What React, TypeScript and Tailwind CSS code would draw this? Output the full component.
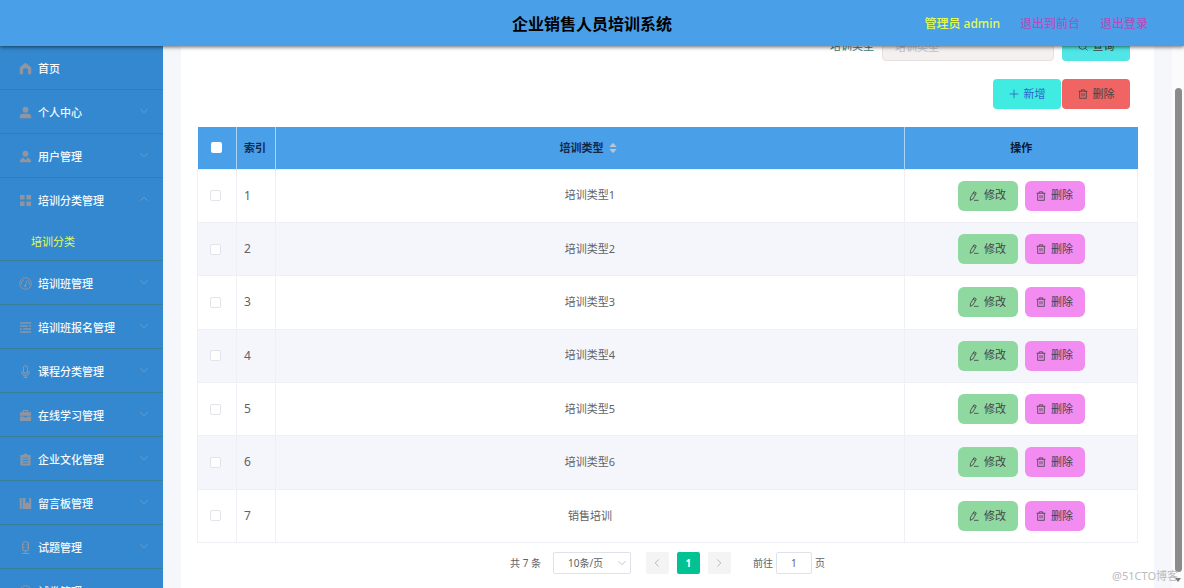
import { ReactNode } from "react";

type IconName =
  | "home"
  | "user"
  | "custom"
  | "grid"
  | "gauge"
  | "lines"
  | "mic"
  | "case"
  | "clipboard"
  | "book"
  | "stand";

interface MenuItem {
  title: string;
  icon: IconName;
  leaf?: boolean;
  children?: string[];
}

const menus: MenuItem[] = [
  { title: "首页", icon: "home", leaf: true },
  { title: "个人中心", icon: "user" },
  { title: "用户管理", icon: "custom" },
  { title: "培训分类管理", icon: "grid", children: ["培训分类"] },
  { title: "培训班管理", icon: "gauge" },
  { title: "培训班报名管理", icon: "lines" },
  { title: "课程分类管理", icon: "mic" },
  { title: "在线学习管理", icon: "case" },
  { title: "企业文化管理", icon: "clipboard" },
  { title: "留言板管理", icon: "book" },
  { title: "试题管理", icon: "stand" },
  { title: "试卷管理", icon: "gauge" },
];

const rows = ["培训类型1", "培训类型2", "培训类型3", "培训类型4", "培训类型5", "培训类型6", "销售培训"];

const shapes: Record<IconName, ReactNode> = {
  home: <path fill="currentColor" d="M7 .8.8 5.600v7.200c0 .3.2.5.5.5h3V9.500a2.700 2.700 0 0 1 5.400 0v3.800h3c.3 0 .5-.2.5-.5V5.600z" />,
  user: (
    <g fill="currentColor">
      <circle cx="7" cy="4" r="3.2" />
      <path d="M.8 13.200v-1.600c0-2 1.400-3.300 3.300-3.300h5.800c1.900 0 3.300 1.300 3.300 3.300v1.600z" />
    </g>
  ),
  custom: (
    <g fill="currentColor">
      <circle cx="7" cy="4" r="3.2" />
      <path d="M.8 13.200c0-2.600 1.500-4.500 3.900-5.100L7 11l2.300-2.900c2.400.6 3.900 2.500 3.900 5.100z" />
    </g>
  ),
  grid: <path fill="currentColor" d="M1 1h5v5H1zM8 1h5v5H8zM1 8h5v5H1zM8 8h5v5H8z" />,
  gauge: (
    <g fill="none" stroke="currentColor">
      <circle cx="7" cy="7" r="6.200" />
      <path d="M3 8.500A4.200 4.200 0 0 1 5.500 3.200M8.800 3.300A4.200 4.200 0 0 1 11 8.500M8.200 4.500 7 9" />
      <circle cx="6.800" cy="9.600" r=".9" fill="currentColor" />
    </g>
  ),
  lines: <path stroke="currentColor" strokeWidth="1.500" d="M1 2.200h12M1 5.400h8.500M10.800 5.400H13M1 8.600h2.200M4.500 8.600H13M1 11.800h12" />,
  mic: (
    <g fill="none" stroke="currentColor" strokeWidth="1.200">
      <rect x="4.800" y=".8" width="4.400" height="8" rx="2.200" />
      <path d="M2.800 6.500c0 3 1.700 4.700 4.200 4.700s4.200-1.700 4.200-4.700M7 11.200v2.300M5 13.300h4" />
    </g>
  ),
  case: (
    <g fill="currentColor">
      <path d="M4 3.500V1.200h6v2.300h3v3.800H1V3.500zm1.200 0h3.600V2.300H5.200z" />
      <path d="M1 8.200h4.800v1h2.400v-1H13V13H1z" />
    </g>
  ),
  clipboard: (
    <path fill="currentColor" fillRule="evenodd" d="M5 .8h4v1.400h3.500v11.300h-11V2.200H5zM4 5v1h6V5zm0 2.600v1h6v-1zm0 2.600v1h6v-1z" />
  ),
  book: <path fill="currentColor" d="M.8 1h2.200v12H.8zM3.800 1H7v6l2-1.500L11 7V1h2.200v12H3.800z" />,
  stand: (
    <g fill="none" stroke="currentColor" strokeWidth="1.200">
      <rect x="3.800" y=".8" width="6.400" height="9.800" rx="2.600" />
      <path d="M3.800 4h2M8.200 4h2M3.800 7h2M8.200 7h2M7 10.600v2.600M3 13.400h8" />
    </g>
  ),
};

function MenuIcon({ name }: { name: IconName }) {
  return (
    <svg viewBox="0 0 14 14" className="mb-0.5 h-[13px] w-[13px] shrink-0 text-[#9095a0]" aria-hidden="true">
      {shapes[name]}
    </svg>
  );
}

function Chevron({ className, d }: { className: string; d: string }) {
  return (
    <svg viewBox="0 0 10 10" className={className} fill="none" stroke="currentColor" aria-hidden="true">
      <path d={d} />
    </svg>
  );
}

const DOWN = "M1.500 3.200 5 6.700l3.500-3.500";
const UP = "M1.500 6.700 5 3.200l3.500 3.500";
const LEFT = "M6.700 1.500 3.200 5l3.500 3.500";
const RIGHT = "M3.300 1.500 6.800 5 3.300 8.500";

function TrashIcon() {
  return (
    <svg viewBox="0 0 12 12" className="h-2.5 w-2.5" fill="none" stroke="currentColor" aria-hidden="true">
      <path d="M.8 2.700h10.400M4 2.700V1h4v1.700M2 2.700v8.500h8V2.700M4.800 4.900v4M7.200 4.900v4" />
    </svg>
  );
}

function EditIcon() {
  return (
    <svg viewBox="0 0 12 12" className="h-2.5 w-2.5" fill="none" stroke="currentColor" aria-hidden="true">
      <path d="M6 .8 8.800 2.400 4.700 9.600 1.500 11.200l.3-3.400zM4.900 2.700l2.800 1.600M6 11.200h5.400" />
    </svg>
  );
}

function Sidebar() {
  return (
    <nav className="w-[163px] shrink-0 overflow-hidden bg-[#3388cf]">
      <ul>
        {menus.map((item) => (
          <li key={item.title} className="border-b border-[#38809a]">
            <a href="#" className="flex h-[43px] items-center gap-1.5 pt-1 pr-3.5 pl-[19px] text-[11px] font-medium text-[#f4f9fd]">
              <MenuIcon name={item.icon} />
              <span className="flex-1">{item.title}</span>
              {!item.leaf && (
                <Chevron className="mb-1.5 h-2.5 w-2.5 text-[#6c9fcb]" d={item.children ? UP : DOWN} />
              )}
            </a>
            {item.children?.map((child) => (
              <a key={child} href="#" className="flex h-[39px] items-center pt-1 pl-[31px] text-[11px] text-[#e3fb52]">
                {child}
              </a>
            ))}
          </li>
        ))}
      </ul>
    </nav>
  );
}

function DataTable() {
  return (
    <table className="h-[416px] w-full table-fixed border-collapse text-[11px] text-[#606266]">
      <colgroup>
        <col className="w-[39px]" />
        <col className="w-[39px]" />
        <col />
        <col className="w-[233px]" />
      </colgroup>
      <thead>
        <tr className="h-[42px] bg-[#4a9fe9] text-[#13294a]">
          <th className="border-r border-[#a9d3f5]">
            <input type="checkbox" aria-label="全选" className="mx-auto block h-[11px] w-[11px] appearance-none rounded-xs bg-white" />
          </th>
          <th className="border-r border-[#a9d3f5] pl-[7px] text-left font-bold">索引</th>
          <th className="border-r border-[#a9d3f5] pr-1 font-bold">
            <button className="inline-flex items-center gap-[5px] align-middle">
              培训类型
              <svg viewBox="0 0 8 12" className="h-3 w-2 text-[#c0c4cc]" fill="currentColor" aria-hidden="true">
                <path d="M4 .8 7.700 5H.3zM4 11.200.3 7h7.400z" />
              </svg>
            </button>
          </th>
          <th className="font-bold text-[#101a2c]">操作</th>
        </tr>
      </thead>
      <tbody>
        {rows.map((name, idx) => (
          <tr key={name} className="border border-[#eef0f5] even:bg-[#f5f6fb]">
            <td className="border-r border-[#eef0f5]">
              <input
                type="checkbox"
                aria-label={`选择${name}`}
                className="ml-3 block h-[11px] w-[11px] appearance-none rounded-xs border border-[#e2e4ea] bg-white"
              />
            </td>
            <td className="border-r border-[#eef0f5] pl-[7px] text-xs">{idx + 1}</td>
            <td className="border-r border-[#eef0f5] text-center">{name}</td>
            <td>
              <div className="flex justify-center gap-[7px] text-[#444]">
                <button className="flex h-[30px] w-[60px] items-center justify-center gap-[5px] rounded-md bg-[#8fd8a0]">
                  <EditIcon />
                  修改
                </button>
                <button className="flex h-[30px] w-[60px] items-center justify-center gap-[5px] rounded-md bg-[#f28cf0]">
                  <TrashIcon />
                  删除
                </button>
              </div>
            </td>
          </tr>
        ))}
      </tbody>
    </table>
  );
}

function Pagination() {
  return (
    <div className="mt-[9px] flex items-center justify-center text-[10px] text-[#606266]">
      <span className="mr-3">共 7 条</span>
      <div className="relative mr-[15px]">
        <select
          aria-label="每页条数"
          className="block h-[22px] w-[78px] appearance-none rounded-xs border border-[#dfe2e8] bg-white pl-3.5"
        >
          <option>10条/页</option>
        </select>
        <Chevron className="pointer-events-none absolute top-1.5 right-1 h-2.5 w-2.5 text-[#c0c4cc]" d={DOWN} />
      </div>
      <div className="mr-[22px] flex gap-2">
        <button aria-label="上一页" className="flex h-[22px] w-[23px] items-center justify-center rounded-xs bg-[#f4f4f5] text-[#b4b8c0]">
          <Chevron className="h-2.5 w-2.5" d={LEFT} />
        </button>
        <button className="h-[22px] w-[23px] rounded-xs bg-[#00c292] font-bold text-white">1</button>
        <button aria-label="下一页" className="flex h-[22px] w-[23px] items-center justify-center rounded-xs bg-[#f4f4f5] text-[#b4b8c0]">
          <Chevron className="h-2.5 w-2.5" d={RIGHT} />
        </button>
      </div>
      <label className="flex items-center gap-[3px]">
        前往
        <input defaultValue="1" className="h-[22px] w-9 rounded-xs border border-[#dfe2e8] text-center" />
        页
      </label>
    </div>
  );
}

export default function App() {
  return (
    <div className="flex h-screen flex-col overflow-hidden bg-[#f6f7fa] font-['Noto_Sans','Noto_Sans_CJK_SC',sans-serif]">
      <header className="relative z-10 grid h-[46px] shrink-0 grid-cols-[1fr_auto_1fr] items-center bg-[#4a9fe9] pt-0.5 shadow-[0_1px_4px_rgba(0,0,0,0.6)]">
        <h1 className="col-start-2 text-base font-bold text-black">企业销售人员培训系统</h1>
        <div className="flex justify-end gap-5 pr-9 text-xs">
          <span className="font-medium text-[#e3fb52]">管理员 admin</span>
          <a href="#" className="text-[#b04bb8]">退出到前台</a>
          <a href="#" className="text-[#b04bb8]">退出登录</a>
        </div>
      </header>

      <div className="flex min-h-0 flex-1">
        <Sidebar />

        <main className="min-w-0 flex-1 overflow-hidden px-[18px]">
          {/* list is scrolled, so the search row sits partly under the header */}
          <div className="-mt-[15px] min-h-full bg-white px-4 pb-10 text-[11px]">
            <form className="flex items-center justify-end pr-2">
              <label htmlFor="typeName" className="mr-2 text-[#3d8080]">培训类型</label>
              <input
                id="typeName"
                placeholder="培训类型"
                className="mr-2 h-[30px] w-[172px] rounded-sm border border-[#e4e0e2] bg-[#f4f0f0] px-3 placeholder:text-[#c0c4cc]"
              />
              <button type="button" className="flex h-[30px] w-[68px] items-center justify-center gap-[5px] rounded-sm bg-[#50e6e6] text-[#444]">
                <svg viewBox="0 0 12 12" className="h-2.5 w-2.5" fill="none" stroke="currentColor" aria-hidden="true">
                  <circle cx="5.500" cy="5.500" r="4.500" />
                  <path d="m8.700 8.700 2.600 2.600" />
                </svg>
                查询
              </button>
            </form>

            <div className="my-[18px] flex justify-end gap-px pr-2">
              <button className="flex h-[30px] w-[68px] items-center justify-center gap-[5px] rounded-sm bg-[#40ece2] text-[#2a66c8]">
                <svg viewBox="0 0 12 12" className="h-2.5 w-2.5" stroke="currentColor" aria-hidden="true">
                  <path d="M6 .8v10.400M.8 6h10.400" />
                </svg>
                新增
              </button>
              <button className="flex h-[30px] w-[68px] items-center justify-center gap-[5px] rounded-sm bg-[#f06464] text-[#444]">
                <TrashIcon />
                删除
              </button>
            </div>

            <DataTable />
            <Pagination />
          </div>
        </main>

        <div className="flex w-3 shrink-0 flex-col items-center bg-[#fbfbfb] pt-[42px] pb-1" aria-hidden="true">
          <div className="w-[7px] flex-1 rounded-full bg-[#8b8b8b]" />
          <svg viewBox="0 0 8 12" className="h-3 w-2 text-[#777]" fill="currentColor">
            <path d="M1 6h6L4 10z" />
          </svg>
        </div>
      </div>

      <span className="pointer-events-none absolute right-1.5 bottom-1 z-20 text-[11px] text-[#b9bbbf]">@51CTO博客</span>
    </div>
  );
}
